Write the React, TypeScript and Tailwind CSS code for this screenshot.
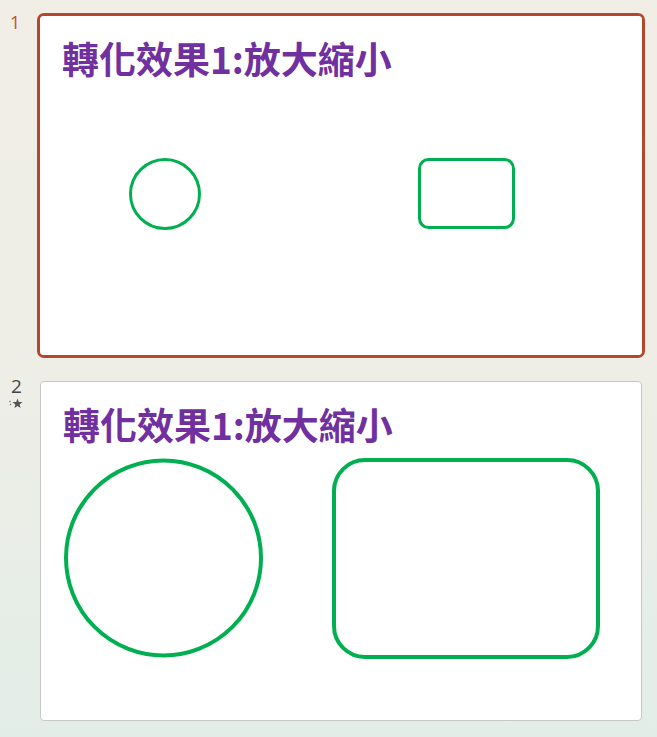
const TITLE = "轉化效果1:放大縮小"

function Title() {
    return (
        <h1
            className="absolute left-[22px] top-[18px] text-[37px] leading-[48px] font-bold text-[#7030a0] whitespace-nowrap"
            style={{ fontFamily: '"Noto Sans CJK TC", "Noto Sans", sans-serif' }}
        >
            {TITLE}
        </h1>
    )
}

function AnimStar() {
    return (
        <svg width="14" height="11" viewBox="0 0 14 11">
            <circle cx="1" cy="3.5" r="0.8" fill="#777" />
            <circle cx="1.5" cy="6.5" r="0.8" fill="#777" />
            <path d="M8.5 0.5 L9.8 4 L13.5 4.1 L10.6 6.4 L11.6 10 L8.5 7.9 L5.4 10 L6.4 6.4 L3.5 4.1 L7.2 4 Z" fill="#555" />
        </svg>
    )
}

function SlideOne() {
    return (
        <div className="relative w-[602px] h-[339px] bg-white rounded-[4px] overflow-hidden">
            <Title />
            <svg className="absolute inset-0" width="602" height="339" viewBox="0 0 602 339">
                <circle cx="125" cy="178" r="34.5" fill="none" stroke="#00b050" strokeWidth="3" />
                <rect x="379.5" y="143.5" width="94" height="68" rx="9" fill="none" stroke="#00b050" strokeWidth="3" />
            </svg>
        </div>
    )
}

function SlideTwo() {
    return (
        <div className="relative w-[602px] h-[340px] bg-white border border-[#c8c8c8] rounded-[4px] overflow-hidden">
            <Title />
            <svg className="absolute -left-px -top-px" width="602" height="340" viewBox="0 0 602 340">
                <circle cx="123.5" cy="177" r="97.5" fill="none" stroke="#00b050" strokeWidth="4" />
                <rect x="294" y="79" width="264" height="197" rx="31" fill="none" stroke="#00b050" strokeWidth="4" />
            </svg>
        </div>
    )
}

export default function App() {
    return (
        <div
            className="w-[657px] h-[737px] bg-gradient-to-b from-[#f1eee6] via-[#eeeee6] to-[#e3ede8] pt-[13px] flex flex-col gap-[23px]"
            style={{ fontFamily: '"Open Sans", "Liberation Sans", sans-serif' }}
        >
            <div className="flex">
                <div className="w-[37px] pl-[10px] text-[18px] leading-[18px] text-[#c4502e]">1</div>
                <div className="border-[3px] border-[#b5472c] rounded-[7px]">
                    <SlideOne />
                </div>
            </div>
            <div className="flex">
                <div className="w-[40px] flex flex-col pl-[9px] -mt-[5px]">
                    <span className="pl-[2px] text-[19px] leading-[20px] text-[#444]">2</span>
                    <span className="mt-[2px]">
                        <AnimStar />
                    </span>
                </div>
                <SlideTwo />
            </div>
        </div>
    )
}
